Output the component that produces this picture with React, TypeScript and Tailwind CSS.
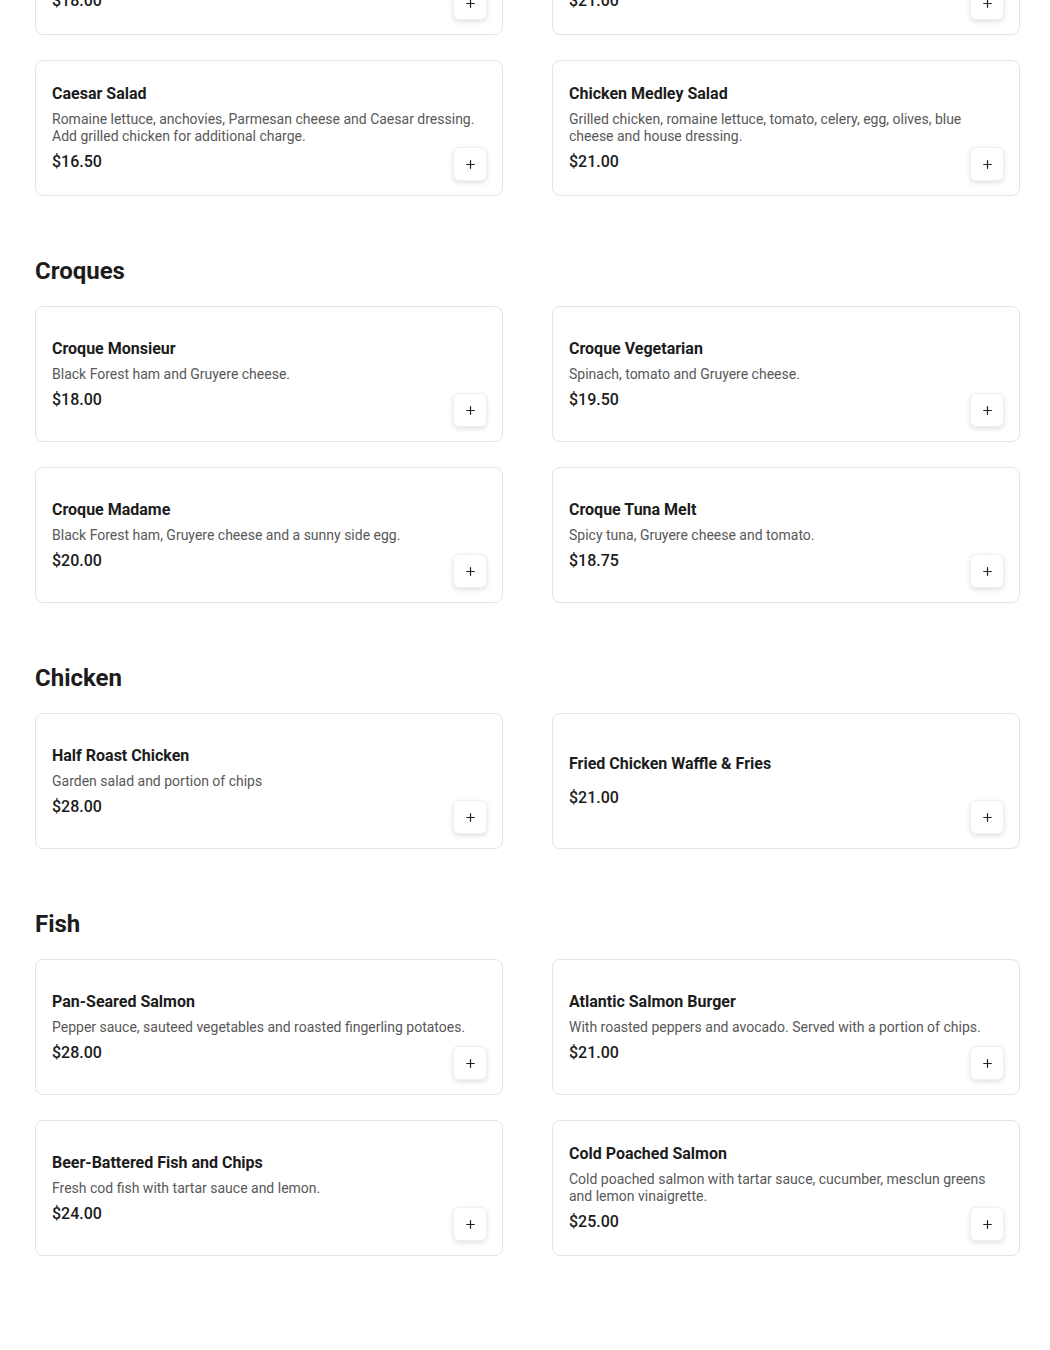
import { Plus } from "lucide-react";

type Item = { name: string; desc?: string; price: string };
type Section = { title: string; items: Item[] };

const menu: Section[] = [
  {
    title: "Salads",
    items: [
      {
        name: "Greek Salad",
        desc: "Romaine lettuce, tomato, cucumber, red onion, kalamata olives, feta cheese and oregano vinaigrette.",
        price: "$18.00",
      },
      {
        name: "Cobb Salad",
        desc: "Grilled chicken, bacon, hard boiled egg, avocado, tomato, blue cheese and house dressing.",
        price: "$21.00",
      },
      {
        name: "Caesar Salad",
        desc: "Romaine lettuce, anchovies, Parmesan cheese and Caesar dressing. Add grilled chicken for additional charge.",
        price: "$16.50",
      },
      {
        name: "Chicken Medley Salad",
        desc: "Grilled chicken, romaine lettuce, tomato, celery, egg, olives, blue cheese and house dressing.",
        price: "$21.00",
      },
    ],
  },
  {
    title: "Croques",
    items: [
      { name: "Croque Monsieur", desc: "Black Forest ham and Gruyere cheese.", price: "$18.00" },
      { name: "Croque Vegetarian", desc: "Spinach, tomato and Gruyere cheese.", price: "$19.50" },
      { name: "Croque Madame", desc: "Black Forest ham, Gruyere cheese and a sunny side egg.", price: "$20.00" },
      { name: "Croque Tuna Melt", desc: "Spicy tuna, Gruyere cheese and tomato.", price: "$18.75" },
    ],
  },
  {
    title: "Chicken",
    items: [
      { name: "Half Roast Chicken", desc: "Garden salad and portion of chips", price: "$28.00" },
      { name: "Fried Chicken Waffle & Fries", price: "$21.00" },
    ],
  },
  {
    title: "Fish",
    items: [
      {
        name: "Pan-Seared Salmon",
        desc: "Pepper sauce, sauteed vegetables and roasted fingerling potatoes.",
        price: "$28.00",
      },
      {
        name: "Atlantic Salmon Burger",
        desc: "With roasted peppers and avocado. Served with a portion of chips.",
        price: "$21.00",
      },
      { name: "Beer-Battered Fish and Chips", desc: "Fresh cod fish with tartar sauce and lemon.", price: "$24.00" },
      {
        name: "Cold Poached Salmon",
        desc: "Cold poached salmon with tartar sauce, cucumber, mesclun greens and lemon vinaigrette.",
        price: "$25.00",
      },
    ],
  },
];

function MenuCard({ item }: { item: Item }) {
  return (
    <div className="relative flex h-[136px] items-center rounded-lg border border-[#e4e4e4] bg-white px-4">
      <div className="flex flex-col">
        <p className="text-[16px] font-bold leading-6 text-[#1c1c1c]">{item.name}</p>
        {item.desc && (
          <p className="mt-[5px] text-[14px] leading-[17px] text-[#585858]">{item.desc}</p>
        )}
        <p
          className={
            item.desc
              ? "mt-[5px] text-[16px] font-medium leading-6 text-[#1c1c1c]"
              : "mt-[10px] text-[16px] font-medium leading-6 text-[#1c1c1c]"
          }
        >
          {item.price}
        </p>
      </div>
      <button className="absolute bottom-[14px] right-[15px] flex h-[34px] w-[34px] items-center justify-center rounded-md border border-[#f0f0f0] bg-white shadow-[0_2px_5px_rgba(0,0,0,0.12)]">
        <Plus size={13} strokeWidth={2.25} className="text-[#222]" />
      </button>
    </div>
  );
}

export default function App() {
  return (
    <div className="h-[1350px] overflow-hidden bg-white font-['Roboto',sans-serif]">
      <div className="-mt-[152px] pl-[35px] pr-[30px]">
        {menu.map((s, idx) => (
          <section key={s.title} className={idx === 0 ? "" : "mt-[59px]"}>
            <h2 className="mb-[19px] text-[24px] font-bold leading-8 text-[#1c1c1c]">{s.title}</h2>
            <div className="grid grid-cols-2 gap-x-[49px] gap-y-[25px]">
              {s.items.map((it) => (
                <MenuCard key={it.name} item={it} />
              ))}
            </div>
          </section>
        ))}
      </div>
    </div>
  );
}
